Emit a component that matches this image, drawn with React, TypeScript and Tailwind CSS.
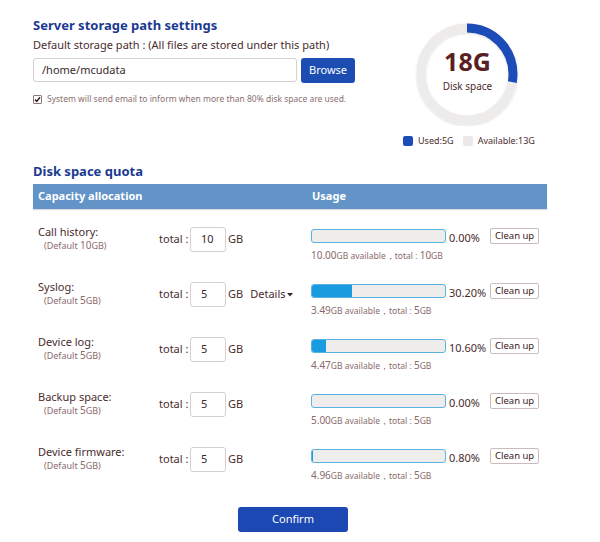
import React from "react";

const rows = [
  { name: "Call history:", def: "10GB", total: "10", pct: 0, pctText: "0.00%", avail: "10.00", tot: "10", details: false },
  { name: "Syslog:", def: "5GB", total: "5", pct: 30.2, pctText: "30.20%", avail: "3.49", tot: "5", details: true },
  { name: "Device log:", def: "5GB", total: "5", pct: 10.6, pctText: "10.60%", avail: "4.47", tot: "5", details: false },
  { name: "Backup space:", def: "5GB", total: "5", pct: 0, pctText: "0.00%", avail: "5.00", tot: "5", details: false },
  { name: "Device firmware:", def: "5GB", total: "5", pct: 0.8, pctText: "0.80%", avail: "4.96", tot: "5", details: false },
];

function Donut() {
  const r = 46;
  const c = 2 * Math.PI * r;
  const used = (5 / 18) * c;
  return (
    <div className="relative w-[104px] h-[104px]">
      <svg width="104" height="104" viewBox="0 0 104 104" className="absolute inset-0">
        <defs>
          <filter id="sh" x="-20%" y="-20%" width="140%" height="140%">
            <feDropShadow dx="0" dy="1" stdDeviation="1.2" floodColor="#000" floodOpacity="0.15" />
          </filter>
        </defs>
        <circle cx="52" cy="52" r={r} fill="none" stroke="#eeebeb" strokeWidth="9" filter="url(#sh)" />
        <circle
          cx="52"
          cy="52"
          r={r}
          fill="none"
          stroke="#1c4cb8"
          strokeWidth="9"
          strokeDasharray={`${used} ${c}`}
          transform="rotate(-90 52 52)"
        />
      </svg>
      <div className="absolute inset-0 flex flex-col items-center justify-center">
        <div className="text-[25px] font-bold leading-[28px] text-[#5a1f22] mt-[-8px]">18G</div>
        <div className="text-[10px] leading-[14px] text-[#4a2a2a] mt-[4px]">Disk space</div>
      </div>
    </div>
  );
}

export default function App() {
  return (
    <div className="w-[600px] h-[542px] bg-white font-['Noto_Sans','Open_Sans',sans-serif] text-[#4a2c2c] overflow-hidden">
      <div className="pl-[33px] w-[547px]">
        {/* Top section */}
        <div className="flex">
          <div className="w-[340px] pt-[16px]">
            <div className="text-[13px] font-bold leading-[19px] text-[#1a3a92]">Server storage path settings</div>
            <div className="text-[11px] leading-[16px] mt-[2px] text-[#4a2c2c]">
              Default storage path : (All files are stored under this path)
            </div>
            <div className="flex gap-[4px] mt-[5px]">
              <div className="w-[264px] h-[24px] border border-[#d8d0d0] rounded-[3px] flex items-center pl-[8px] text-[11px] text-[#3a2a2a]">
                /home/mcudata
              </div>
              <button className="w-[54px] h-[25px] bg-[#1c4db3] rounded-[3px] text-white text-[11px] flex items-center justify-center">
                Browse
              </button>
            </div>
            <div className="flex items-center mt-[10px] gap-[5px]">
              <div className="w-[9px] h-[9px] border border-[#8a7a7a] rounded-[1px] bg-white flex items-center justify-center">
                <svg width="7" height="7" viewBox="0 0 7 7">
                  <path d="M1 3.6 L2.8 5.4 L6 1.2" fill="none" stroke="#3a2020" strokeWidth="1.5" />
                </svg>
              </div>
              <div className="text-[8.5px] leading-[12px] text-[#8a7070]">
                System will send email to inform when more than 80% disk space are used.
              </div>
            </div>
          </div>
          <div className="flex flex-col items-center pt-[22px] ml-[27px]">
            <Donut />
            <div className="flex items-center gap-[5px] mt-[9px] ml-[3px] text-[9px] leading-[12px] text-[#4a2c2c]">
              <span className="w-[10px] h-[10px] rounded-[2px] bg-[#1c4cb8]" />
              <span>Used:5G</span>
              <span className="w-[10px] h-[10px] rounded-[2px] bg-[#ece8e8] ml-[4px]" />
              <span>Available:13G</span>
            </div>
          </div>
        </div>

        {/* Quota */}
        <div className="text-[13px] font-bold leading-[19px] text-[#1a3a92] mt-[15px]">Disk space quota</div>
        <div className="h-[25px] bg-[#6294c7] flex items-center text-white text-[11px] font-bold mt-[3px] shadow-[0_1px_1px_rgba(0,0,0,0.15)]">
          <div className="w-[279px] pl-[5px]">Capacity allocation</div>
          <div>Usage</div>
        </div>

        <div className="mt-[3px]">
          {rows.map((r) => (
            <div key={r.name} className="h-[55px] flex items-center">
              <div className="w-[126px] pl-[5px] pb-[2px] flex flex-col gap-[1px]">
                <div className="text-[11px] leading-[12px] text-[#4a2c2c]">{r.name}</div>
                <div className="text-[9px] leading-[12px] text-[#8a6a6a] pl-[6px]">
                  (Default <span className="text-[10px]">{r.def.replace("GB", "")}</span>GB)
                </div>
              </div>
              <div className="w-[152px] flex items-center">
                <span className="text-[11px] w-[31px]">total :</span>
                <div className="w-[36px] h-[25px] border border-[#d8d0d0] rounded-[3px] flex items-center pl-[10px] text-[11px] text-[#3a2a2a]">
                  {r.total}
                </div>
                <span className="text-[11px] ml-[2px]">GB</span>
                {r.details && (
                  <span className="text-[11px] ml-[7px] flex items-center">
                    Details
                    <svg width="6" height="4" viewBox="0 0 6 4" className="ml-[1px] mt-[1px]">
                      <path d="M0 0 L6 0 L3 3.5 Z" fill="#3a2a2a" />
                    </svg>
                  </span>
                )}
              </div>
              <div className="flex flex-col pt-[11px]">
                <div className="flex items-center">
                  <div className="w-[135px] h-[14px] border border-[#5ab2e3] rounded-[3px] bg-[#efecec] overflow-hidden">
                    <div className="h-full bg-[#1a9be0]" style={{ width: `${r.pct}%` }} />
                  </div>
                  <div className="w-[44px] pl-[3px] text-[11px] leading-[14px] mt-[3px] text-[#4a2c2c]">{r.pctText}</div>
                  <button className="h-[16px] px-[4px] border border-[#cbbcbc] rounded-[2px] bg-white text-[9.5px] leading-[14px] text-[#3a2020]">
                    Clean up
                  </button>
                </div>
                <div className="text-[8.5px] leading-[14px] mt-[3px] text-[#8a6a6a]">
                  <span className="text-[10px]">{r.avail}</span>GB available，total : <span className="text-[10px]">{r.tot}</span>GB
                </div>
              </div>
            </div>
          ))}
        </div>

        <div className="flex justify-center mt-[20px]">
          <button className="w-[110px] h-[25px] bg-[#1c48b3] rounded-[3px] text-white text-[11px] ml-[6px]">Confirm</button>
        </div>
      </div>
    </div>
  );
}
